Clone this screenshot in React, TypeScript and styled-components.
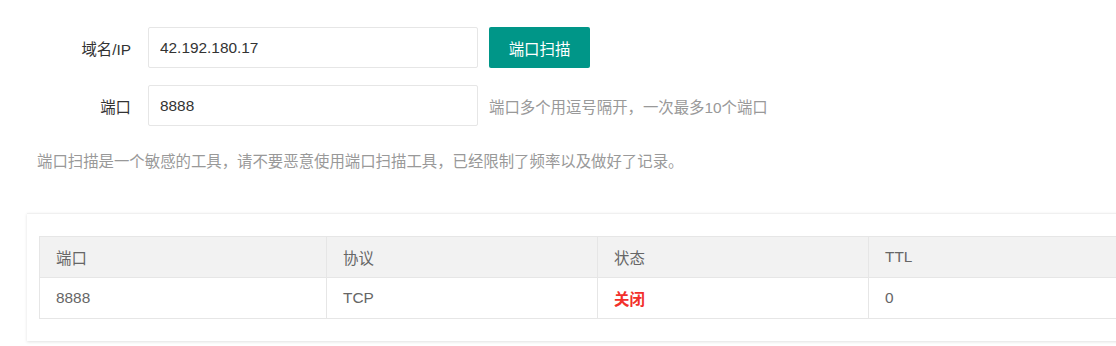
import React, { useState } from 'react';
import styled, { createGlobalStyle } from 'styled-components';

const GlobalStyle = createGlobalStyle`
  html, body {
    margin: 0;
    padding: 0;
    background: #fff;
    overflow: hidden;
  }
  body {
    font-family: "Liberation Sans", "Noto Sans CJK SC", sans-serif;
    font-size: 15.4px;
    color: #333;
  }
  * {
    box-sizing: border-box;
  }
`;

const Page = styled.div`
  padding-top: 27px;
  width: 1116px;
  height: 346px;
  overflow: hidden;
`;

const FormRow = styled.div`
  display: flex;
  align-items: center;
  margin-bottom: 17px;
`;

const Label = styled.label`
  width: 131px;
  margin-right: 17px;
  text-align: right;
  color: #333;
`;

const Input = styled.input`
  width: 330px;
  height: 41px;
  border: 1px solid #e6e6e6;
  border-radius: 2px;
  padding: 0 11px;
  font-family: inherit;
  font-size: 15.4px;
  color: #333;
  outline: none;
  background: #fff;

  &:focus {
    border-color: #d2d2d2;
  }
`;

const ScanButton = styled.button`
  margin-left: 11px;
  width: 101px;
  height: 41px;
  border: none;
  border-radius: 2px;
  background: #009688;
  color: #fff;
  font-family: inherit;
  font-size: 15.4px;
  cursor: pointer;

  &:hover {
    opacity: 0.85;
  }
`;

const Hint = styled.span`
  margin-left: 11px;
  color: #999;
`;

const Note = styled.p`
  margin: 26px 0 0;
  padding-left: 37px;
  line-height: 20px;
  color: #999;
`;

const Card = styled.div`
  margin: 41px 0 0 27px;
  width: 1150px;
  padding: 22px 12px;
  background: #fff;
  border-top: 1px solid #f0f0f0;
  box-shadow: 0 1px 3px rgba(0, 0, 0, 0.12);
`;

const Table = styled.table`
  width: 100%;
  border-collapse: collapse;
  table-layout: fixed;
  border: 1px solid #e6e6e6;
`;

const HeadCell = styled.th<{ $width?: number }>`
  width: ${p => (p.$width ? `${p.$width}px` : 'auto')};
  height: 41px;
  padding: 0 16px;
  text-align: left;
  font-weight: normal;
  color: #666;
  background: #f2f2f2;
  border: 1px solid #e6e6e6;
`;

const Cell = styled.td<{ $status?: boolean }>`
  height: 41px;
  padding: 0 16px;
  color: ${p => (p.$status ? '#f2302b' : '#666')};
  font-weight: ${p => (p.$status ? 'bold' : 'normal')};
  border: 1px solid #e6e6e6;
`;

interface ScanResult {
  port: string;
  protocol: string;
  open: boolean;
  ttl: number;
}

const App: React.FC = () => {
  const [host, setHost] = useState('42.192.180.17');
  const [ports, setPorts] = useState('8888');
  const [results] = useState<ScanResult[]>([
    { port: '8888', protocol: 'TCP', open: false, ttl: 0 },
  ]);

  return (
    <>
      <GlobalStyle />
      <Page>
        <FormRow>
          <Label>域名/IP</Label>
          <Input value={host} onChange={e => setHost(e.target.value)} />
          <ScanButton>端口扫描</ScanButton>
        </FormRow>
        <FormRow>
          <Label>端口</Label>
          <Input value={ports} onChange={e => setPorts(e.target.value)} />
          <Hint>端口多个用逗号隔开，一次最多10个端口</Hint>
        </FormRow>

        <Note>端口扫描是一个敏感的工具，请不要恶意使用端口扫描工具，已经限制了频率以及做好了记录。</Note>

        <Card>
          <Table>
            <thead>
              <tr>
                <HeadCell $width={287}>端口</HeadCell>
                <HeadCell $width={271}>协议</HeadCell>
                <HeadCell $width={271}>状态</HeadCell>
                <HeadCell>TTL</HeadCell>
              </tr>
            </thead>
            <tbody>
              {results.map(r => (
                <tr key={r.port}>
                  <Cell>{r.port}</Cell>
                  <Cell>{r.protocol}</Cell>
                  <Cell $status>{r.open ? '开放' : '关闭'}</Cell>
                  <Cell>{r.ttl}</Cell>
                </tr>
              ))}
            </tbody>
          </Table>
        </Card>
      </Page>
    </>
  );
};

export default App;
